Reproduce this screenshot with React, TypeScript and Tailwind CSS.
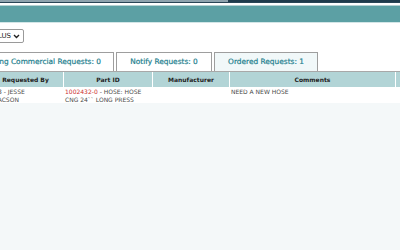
import React from "react";

const tabs = [
  { label: "Pending Commercial Requests: 0", width: "w-[148px]", active: false },
  { label: "Notify Requests: 0", width: "w-[96px]", active: false },
  { label: "Ordered Requests: 1", width: "w-[104px]", active: true },
];

const App = () => {
  return (
    <div className="h-[250px] w-[400px] overflow-hidden bg-[#f4f8f9] font-['DejaVu_Sans',sans-serif]">
      {/* top bars */}
      <div className="flex h-[2px]">
        <div className="w-[228px] bg-[#8ea3ae]" />
        <div className="flex-1 bg-[#1f3b4c]" />
      </div>
      <div className="h-px bg-[#2a4556]" />
      <div className="h-[2px] bg-white" />
      <div className="h-px bg-[#b6d1d3]" />
      <div className="h-[16px] bg-[#5ca0a4]" />
      <div className="h-px bg-[#d3e6e7]" />

      <section className="bg-white">
        {/* select */}
        <div className="h-[29px] pt-[6px]">
          <div className="ml-[-40px] flex h-[14px] w-[64px] items-center justify-end gap-[2px] rounded-[2px] border border-[#9a9a9a] bg-white pr-[3px] text-[7px] text-[#222]">
            <span>PLUS</span>
            <svg width="7" height="5" viewBox="0 0 7 5" fill="none">
              <path d="M1 1l2.5 2.5L6 1" stroke="#222" strokeWidth="1.4" />
            </svg>
          </div>
        </div>

        {/* tabs */}
        <div className="flex h-[20px] gap-[2px] border-b border-[#a8a8a8]">
          {tabs.map((tab, i) => (
            <div
              key={tab.label}
              className={`${tab.width} ${i === 0 ? "ml-[-34px]" : ""} ${
                tab.active ? "bg-[#f1f8f9]" : "bg-white"
              } flex shrink-0 items-center justify-center border border-b-0 border-[#9e9e9e] text-[7.4px] text-[#23808e] whitespace-nowrap [-webkit-text-stroke:0.2px_#23808e]`}
            >
              {tab.label}
            </div>
          ))}
        </div>

        {/* table */}
        <div className="ml-[-12px] grid w-[460px] grid-cols-[75px_88px_76px_165px_54px] gap-x-px bg-white">
          <div className="flex h-[15px] items-center justify-center bg-[#b2d4d6] text-[6px] font-bold text-[#222]">
            Requested By
          </div>
          <div className="flex h-[15px] items-center justify-center bg-[#b2d4d6] text-[6px] font-bold text-[#222]">
            Part ID
          </div>
          <div className="flex h-[15px] items-center justify-center bg-[#b2d4d6] text-[6px] font-bold text-[#222]">
            Manufacturer
          </div>
          <div className="flex h-[15px] items-center justify-center bg-[#b2d4d6] text-[6px] font-bold text-[#222]">
            Comments
          </div>
          <div className="h-[15px] bg-[#b2d4d6]" />

          <div className="h-[16px] pl-[10px] pt-[1px] text-[6px] leading-[7.5px] text-[#4a4a4a]">
            <div>3 - JESSE</div>
            <div className="ml-[-2px]">JACSON</div>
          </div>
          <div className="pl-[1px] pt-[1px] text-[6px] leading-[7.5px] text-[#4a4a4a]">
            <div>
              <span className="text-[#cc2f2f]">1002432-0</span> - HOSE: HOSE
            </div>
            <div>CNG 24`` LONG PRESS</div>
          </div>
          <div />
          <div className="pl-[1px] pt-[1px] text-[6px] leading-[7.5px] text-[#4a4a4a]">NEED A NEW HOSE</div>
          <div />
        </div>
      </section>
    </div>
  );
};

export default App;
